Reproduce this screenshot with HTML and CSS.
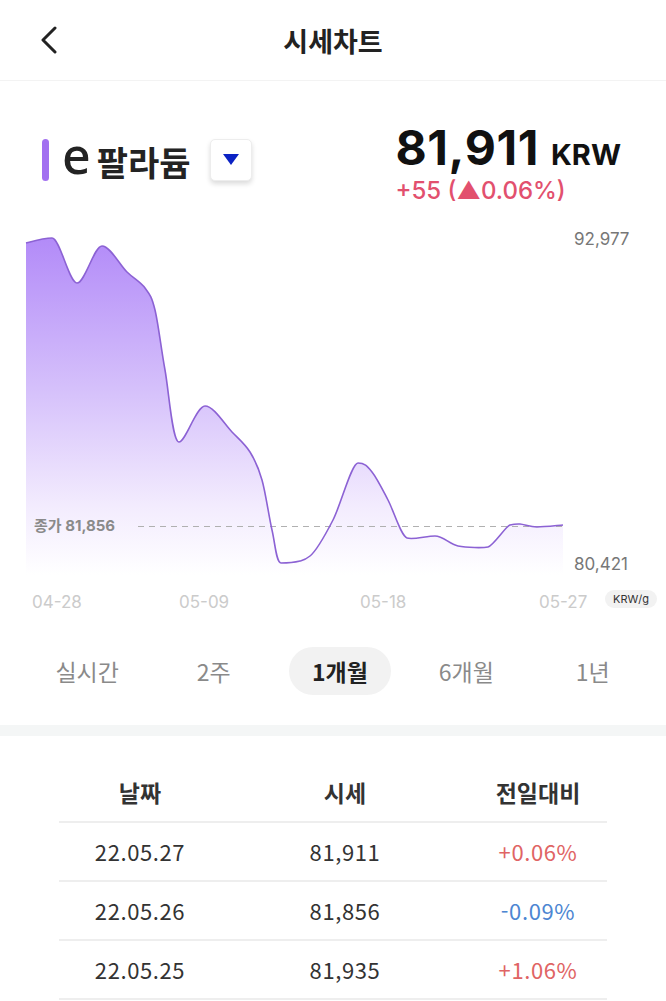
FILE: index.html
```
<!DOCTYPE html>
<html lang="ko">
<head>
<meta charset="utf-8">
<title>시세차트</title>
<link rel="stylesheet" href="styles.css">
</head>
<body>
<header class="topbar">
  <button class="back" aria-label="뒤로">
    <svg width="18" height="28" viewBox="0 0 18 28"><polyline points="15,2 3,14 15,26" fill="none" stroke="#222" stroke-width="3" stroke-linecap="round" stroke-linejoin="round"/></svg>
  </button>
  <h1 class="title">시세차트</h1>
  <span></span>
</header>

<section class="summary">
  <div class="asset">
    <span class="asset-bar"></span>
    <span class="asset-name"><span class="asset-e">e</span><span class="asset-kr">팔라듐</span></span>
    <button class="asset-select" aria-label="선택">
      <svg width="16" height="11" viewBox="0 0 16 11"><polygon points="0,0 16,0 8,11" fill="#0b22c4"/></svg>
    </button>
  </div>
  <div class="quote">
    <div class="quote-price"><span class="price">81,911</span><span class="unit">KRW</span></div>
    <div class="quote-change">+55 (▲0.06%)</div>
  </div>
</section>

<section class="chart">
  <svg class="chart-svg" width="666" height="390" viewBox="0 225 666 390">
    <defs>
      <linearGradient id="fillGrad" gradientUnits="userSpaceOnUse" x1="0" y1="236" x2="0" y2="575">
        <stop offset="0" stop-color="#b28af8"/>
        <stop offset="0.45" stop-color="#d5c0fb"/>
        <stop offset="0.8" stop-color="#f3ecfe"/>
        <stop offset="1" stop-color="#ffffff"/>
      </linearGradient>
    </defs>
    <path fill="url(#fillGrad)" d="M26 243 C30 242 44 238 52 238 C60 238 69 283 77 283 C85 283 94 246 102 246 C110 246 119.8 265 127 272 C134.2 279 140.3 281.7 145 288 C149.7 294.3 151.7 296.3 155 310 C158.3 323.7 161 348 165 370 C169 392 172.3 442 179 442 C185.7 442 196.2 406 205 406 C213.8 406 224.5 424.3 232 432 C239.5 439.7 245 444 250 452 C255 460 258.3 467 262 480 C265.7 493 268.8 516.2 272 530 C275.2 543.8 276.3 563 281 563 C285.7 563 295.2 562.2 300 561 C304.8 559.8 305 560 310 556 C315 552 325 535.5 333 520 C341 504.5 351.5 463 358 463 C364.5 463 367 465.8 372 472 C377 478.2 382.2 489 388 500 C393.8 511 401 536 407 538 C413 540 426.5 536 435 536 C443.5 536 449.2 544.2 458 546 C466.8 547.8 483 548 488 547 C493 546 506 526 510 525 C514 524 515.5 523.7 520 524 C524.5 524.3 530 527 537 527 C544 527 558.7 525.3 563 525 L563 580 L26 580 Z"/>
    <line x1="138" y1="526.5" x2="563" y2="526.5" stroke="#b0b0b0" stroke-width="1.2" stroke-dasharray="6 5"/>
    <path fill="none" stroke="#8c62d4" stroke-width="1.6" d="M26 243 C30 242 44 238 52 238 C60 238 69 283 77 283 C85 283 94 246 102 246 C110 246 119.8 265 127 272 C134.2 279 140.3 281.7 145 288 C149.7 294.3 151.7 296.3 155 310 C158.3 323.7 161 348 165 370 C169 392 172.3 442 179 442 C185.7 442 196.2 406 205 406 C213.8 406 224.5 424.3 232 432 C239.5 439.7 245 444 250 452 C255 460 258.3 467 262 480 C265.7 493 268.8 516.2 272 530 C275.2 543.8 276.3 563 281 563 C285.7 563 295.2 562.2 300 561 C304.8 559.8 305 560 310 556 C315 552 325 535.5 333 520 C341 504.5 351.5 463 358 463 C364.5 463 367 465.8 372 472 C377 478.2 382.2 489 388 500 C393.8 511 401 536 407 538 C413 540 426.5 536 435 536 C443.5 536 449.2 544.2 458 546 C466.8 547.8 483 548 488 547 C493 546 506 526 510 525 C514 524 515.5 523.7 520 524 C524.5 524.3 530 527 537 527 C544 527 558.7 525.3 563 525"/>
  </svg>
  <span class="y-label y-max">92,977</span>
  <span class="y-label y-min">80,421</span>
  <span class="close-label">종가 81,856</span>
  <span class="x-label x1">04-28</span>
  <span class="x-label x2">05-09</span>
  <span class="x-label x3">05-18</span>
  <span class="x-label x4">05-27</span>
  <span class="unit-pill">KRW/g</span>
</section>

<nav class="periods">
  <span class="period">실시간</span>
  <span class="period">2주</span>
  <span class="period active">1개월</span>
  <span class="period">6개월</span>
  <span class="period">1년</span>
</nav>

<div class="divider"></div>

<section class="prices">
  <div class="prices-head">
    <span>날짜</span><span>시세</span><span>전일대비</span>
  </div>
  <div class="prices-row">
    <span>22.05.27</span><span>81,911</span><span class="up">+0.06%</span>
  </div>
  <div class="prices-row">
    <span>22.05.26</span><span>81,856</span><span class="down">-0.09%</span>
  </div>
  <div class="prices-row">
    <span>22.05.25</span><span>81,935</span><span class="up">+1.06%</span>
  </div>
</section>
</body>
</html>
```

FILE: styles.css
```
html, body {
  margin: 0;
  padding: 0;
  background: #ffffff;
}

body {
  width: 666px;
  font-family: "Noto Sans CJK KR", "Noto Sans", sans-serif;
  color: #222222;
  overflow: hidden;
}

.topbar {
  display: grid;
  grid-template-columns: 1fr auto 1fr;
  align-items: center;
  height: 80px;
  border-bottom: 1px solid #f3f3f3;
}

.back {
  justify-self: start;
  margin-left: 40px;
  padding: 0;
  border: 0;
  background: none;
  display: flex;
}

.title {
  margin: 0;
  font-size: 27px;
  font-weight: 700;
  line-height: 1;
  color: #222222;
}

.summary {
  display: flex;
  justify-content: space-between;
  align-items: flex-start;
  height: 144px;
  box-sizing: border-box;
  padding: 43px 45px 0 42px;
}

.asset {
  display: flex;
  align-items: center;
  margin-top: 11px;
}

.asset-bar {
  width: 7px;
  height: 42px;
  border-radius: 4px;
  background: #a270f0;
  margin-right: 13px;
}

.asset-name {
  display: flex;
  align-items: baseline;
  gap: 6px;
  font-size: 34px;
  font-weight: 700;
  line-height: 44px;
  color: #232323;
}

.asset-e {
  font-family: "Noto Sans", sans-serif;
  font-size: 50px;
  font-weight: 500;
  line-height: 44px;
  position: relative;
  top: -2px;
}

.asset-select {
  margin-left: 19px;
  width: 42px;
  height: 42px;
  padding: 0;
  border: 1px solid #ededed;
  border-radius: 5px;
  background: #ffffff;
  box-shadow: 0 3px 5px rgba(0, 0, 0, 0.14);
  display: flex;
  align-items: center;
  justify-content: center;
}

.quote-price {
  display: flex;
  align-items: baseline;
  font-family: Inter, sans-serif;
  font-weight: 700;
  color: #111111;
}

.price {
  font-size: 48px;
  line-height: 48px;
  letter-spacing: 0.6px;
}

.unit {
  font-size: 29px;
  margin-left: 12px;
}

.quote-change {
  font-family: Inter, sans-serif;
  font-size: 24px;
  font-weight: 500;
  line-height: 26px;
  margin-top: 6px;
  color: #e2506e;
}

.chart {
  position: relative;
  height: 390px;
}

.chart-svg {
  position: absolute;
  left: 0;
  top: 0;
}

.y-label {
  position: absolute;
  left: 574px;
  font-family: Inter, sans-serif;
  font-size: 17px;
  line-height: 20px;
  color: #777777;
}

.y-max { top: 4px; }
.y-min { top: 329px; }

.close-label {
  position: absolute;
  left: 34px;
  top: 291px;
  font-family: Inter, "Noto Sans CJK KR", sans-serif;
  font-size: 15px;
  font-weight: 700;
  line-height: 20px;
  color: #8a8a8a;
}

.x-label {
  position: absolute;
  top: 367px;
  font-family: Inter, sans-serif;
  font-size: 17px;
  line-height: 20px;
  color: #cbcbcb;
}

.x1 { left: 32px; }
.x2 { left: 179px; }
.x3 { left: 360px; }
.x4 { left: 539px; }

.unit-pill {
  position: absolute;
  left: 605px;
  top: 365px;
  width: 52px;
  height: 18px;
  border-radius: 9px;
  background: #f2f2f2;
  font-family: Inter, sans-serif;
  font-size: 11px;
  line-height: 18px;
  text-align: center;
  color: #333333;
}

.periods {
  display: grid;
  grid-template-columns: repeat(5, 1fr);
  justify-items: center;
  align-items: center;
  padding: 0 10px 0 24px;
  margin-top: 32px;
  height: 48px;
}

.period {
  font-size: 23px;
  line-height: 48px;
  padding: 0 23px;
  border-radius: 24px;
  color: #8a8a8a;
}

.period.active {
  background: #f2f2f2;
  color: #222222;
  font-weight: 700;
}

.divider {
  margin-top: 30px;
  height: 11px;
  background: #f4f6f6;
}

.prices {
  margin: 0 59px;
}

.prices-head,
.prices-row {
  display: grid;
  grid-template-columns: 162px 248px 138px;
  text-align: center;
  border-bottom: 2px solid #eeeeee;
}

.prices-head {
  padding: 41px 0 14px;
  font-size: 23px;
  font-weight: 700;
  line-height: 30px;
  color: #333333;
}

.prices-row {
  height: 59px;
  box-sizing: border-box;
  line-height: 57px;
  font-size: 22px;
  color: #333333;
  letter-spacing: 0.6px;
}

.up { color: #e06464; }
.down { color: #4d86d2; }
```
